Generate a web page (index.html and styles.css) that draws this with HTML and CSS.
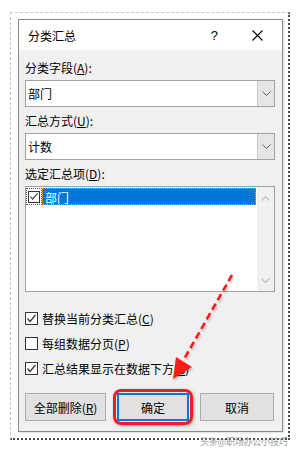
FILE: index.html
```html
<!DOCTYPE html>
<html>
<head>
    <meta charset="UTF-8"/>
    <title>分类汇总</title>
    <link rel="stylesheet" href="styles.css">
</head>
<body>
<div class="paper">
    <div class="dialog">
        <div class="titlebar">
            <span class="title">分类汇总</span>
            <span class="help">?</span>
            <svg class="close" width="11" height="11" viewBox="0 0 11 11">
                <path d="M0.5 0.5 L10.5 10.5 M10.5 0.5 L0.5 10.5" stroke="#000" stroke-width="1.1"/>
            </svg>
        </div>
        <div class="content">
            <div class="label label-first">分类字段(<u>A</u>):</div>
            <div class="combo">
                <span class="combo-text">部门</span>
                <span class="combo-btn">
                    <svg width="9" height="5" viewBox="0 0 9 5"><path d="M0.5 0.5 L4.5 4.5 L8.5 0.5" fill="none" stroke="#606060"/></svg>
                </span>
            </div>

            <div class="label">汇总方式(<u>U</u>):</div>
            <div class="combo">
                <span class="combo-text">计数</span>
                <span class="combo-btn">
                    <svg width="9" height="5" viewBox="0 0 9 5"><path d="M0.5 0.5 L4.5 4.5 L8.5 0.5" fill="none" stroke="#606060"/></svg>
                </span>
            </div>

            <div class="label label-list">选定汇总项(<u>D</u>):</div>
            <div class="listbox">
                <div class="list-items">
                    <div class="list-row">
                        <span class="focus-box">
                            <span class="chk">
                                <svg width="11" height="11" viewBox="0 0 11 11"><path d="M1.5 5.5 L4 8.5 L9.5 2" fill="none" stroke="#333" stroke-width="1.2"/></svg>
                            </span>
                        </span>
                        <span class="list-sel">部门</span>
                    </div>
                </div>
                <div class="scrollbar">
                    <svg width="9" height="5" viewBox="0 0 9 5"><path d="M0.5 4.5 L4.5 0.5 L8.5 4.5" fill="none" stroke="#c2c2c2" stroke-width="1.3"/></svg>
                    <svg width="9" height="5" viewBox="0 0 9 5"><path d="M0.5 0.5 L4.5 4.5 L8.5 0.5" fill="none" stroke="#c2c2c2" stroke-width="1.3"/></svg>
                </div>
            </div>

            <div class="options">
                <div class="opt">
                    <span class="chk">
                        <svg width="11" height="11" viewBox="0 0 11 11"><path d="M1.5 5.5 L4 8.5 L9.5 2" fill="none" stroke="#333" stroke-width="1.2"/></svg>
                    </span>
                    <span>替换当前分类汇总(<u>C</u>)</span>
                </div>
                <div class="opt">
                    <span class="chk"></span>
                    <span>每组数据分页(<u>P</u>)</span>
                </div>
                <div class="opt">
                    <span class="chk">
                        <svg width="11" height="11" viewBox="0 0 11 11"><path d="M1.5 5.5 L4 8.5 L9.5 2" fill="none" stroke="#333" stroke-width="1.2"/></svg>
                    </span>
                    <span>汇总结果显示在数据下方(<u>S</u>)</span>
                </div>
            </div>

            <div class="buttons">
                <button class="btn btn-remove">全部删除(<u>R</u>)</button>
                <span class="highlight"><button class="btn btn-ok">确定</button></span>
                <button class="btn btn-cancel">取消</button>
            </div>
        </div>
    </div>
</div>

<!-- 标注箭头 -->
<svg class="arrow" width="301" height="451" viewBox="0 0 301 451">
    <line x1="232" y1="275" x2="183" y2="361" stroke="#ff1a1a" stroke-width="2.6" stroke-dasharray="7 4"/>
    <polygon points="173,379 176,357 192,367" fill="#ff1a1a"/>
</svg>

<div class="watermark">头条@职场办公小技巧</div>
</body>
</html>
```

FILE: styles.css
```css
html, body {
    margin: 0;
    padding: 0;
    background: #fff;
    overflow: hidden;
}

body {
    width: 301px;
    height: 451px;
    padding: 12px 0 0 10px;
    box-sizing: border-box;
    position: relative;
    font-family: "Noto Sans CJK SC", "Microsoft YaHei", sans-serif;
    font-size: 12px;
    color: #000;
}

u {
    text-decoration: underline;
    text-underline-offset: 1px;
}

.paper {
    width: 280px;
    height: 428px;
    box-sizing: border-box;
    border-top: 1px dashed #c8c8c8;
    border-left: 1px dashed #c0c0c0;
    border-right: 2px dotted #4a4a4a;
    border-bottom: 2px dotted #4a4a4a;
    padding: 6px 0 0 7px;
}

.dialog {
    width: 265px;
    height: 413px;
    box-sizing: border-box;
    border: 1px solid #8a8a8a;
    background: #f0f0f0;
    box-shadow: 1px 1px 2px rgba(0, 0, 0, 0.15);
}

.titlebar {
    height: 30px;
    background: #fff;
    display: flex;
    align-items: center;
    padding-left: 9px;
}

.title {
    flex: 1;
    font-size: 12px;
}

.help {
    font-family: "Liberation Sans", sans-serif;
    font-size: 13px;
    margin-right: 34px;
}

.close {
    margin-right: 19px;
}

.content {
    padding: 0 7px 0 6px;
}

.label {
    height: 16px;
    line-height: 16px;
    margin-top: 6px;
    margin-bottom: 4px;
}

.label-first {
    margin-top: 10px;
}

.label-list {
    margin-top: 5px;
}

.combo {
    height: 27px;
    box-sizing: border-box;
    border: 1px solid #a0a0a0;
    background: #fff;
    display: flex;
}

.combo + .label {
    margin-top: 6px;
}

.combo-text {
    flex: 1;
    line-height: 25px;
    padding-left: 2px;
}

.combo-btn {
    width: 16px;
    background: #e5e5e5;
    border-left: 1px solid #c8c8c8;
    display: flex;
    align-items: center;
    justify-content: center;
}

.listbox {
    height: 106px;
    box-sizing: border-box;
    border: 1px solid #a0a0a0;
    background: #fff;
    display: flex;
}

.list-items {
    flex: 1;
    padding-top: 1px;
}

.list-row {
    display: flex;
    height: 17px;
    align-items: center;
}

.focus-box {
    height: 17px;
    width: 16px;
    box-sizing: border-box;
    border: 1px dotted #555;
    display: flex;
    align-items: center;
    justify-content: center;
}

.focus-box .chk {
    width: 12px;
    height: 12px;
}

.list-sel {
    flex: 1;
    height: 17px;
    line-height: 17px;
    background: #0078d7;
    color: #fff;
    padding-left: 2px;
    box-sizing: border-box;
    border: 1px dotted #f0a030;
    margin-right: 1px;
}

.scrollbar {
    width: 17px;
    background: #f0f0f0;
    display: flex;
    flex-direction: column;
    justify-content: space-between;
    align-items: center;
    padding: 9px 0 8px;
    box-sizing: border-box;
}

.options {
    margin-top: 14px;
}

.opt {
    height: 25px;
    display: flex;
    align-items: center;
    gap: 4px;
}

.chk {
    width: 13px;
    height: 13px;
    box-sizing: border-box;
    border: 1px solid #333;
    background: #fff;
    display: flex;
    align-items: center;
    justify-content: center;
}

.buttons {
    margin-top: 8px;
    height: 36px;
    display: flex;
    align-items: center;
    gap: 7px;
}

.btn {
    height: 28px;
    box-sizing: border-box;
    border: 1px solid #adadad;
    background: #e1e1e1;
    font-family: inherit;
    font-size: 12px;
    color: #000;
    padding: 0;
}

.btn-remove {
    width: 81px;
}

.btn-cancel {
    width: 74px;
}

.btn-ok {
    width: 72px;
    display: block;
    border: 1px solid #0078d7;
    box-shadow: inset 0 0 0 1px #0078d7;
}

.highlight {
    border: 3px solid #ee1c24;
    border-radius: 8px;
    padding: 1px;
    box-shadow: 1px 1px 3px rgba(0, 0, 0, 0.35);
}

.arrow {
    position: absolute;
    left: 0;
    top: 0;
    pointer-events: none;
    filter: drop-shadow(1px 2px 1px rgba(0, 0, 0, 0.2));
}

.watermark {
    position: absolute;
    left: 200px;
    top: 435px;
    font-size: 9px;
    color: #9a9a9a;
    letter-spacing: -0.2px;
}
```
